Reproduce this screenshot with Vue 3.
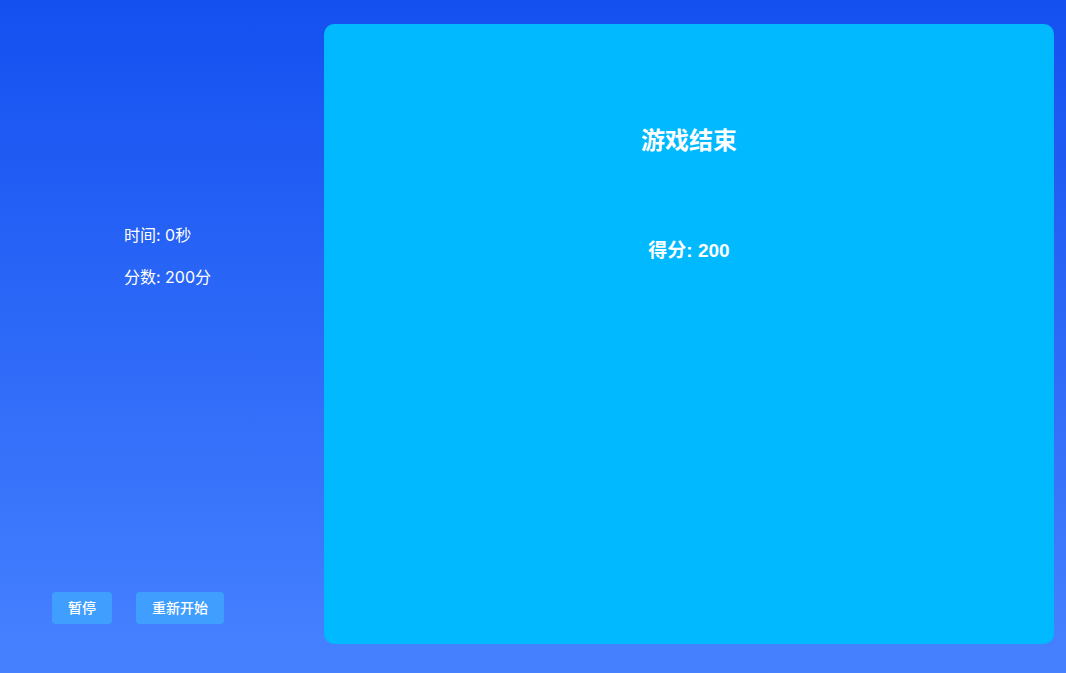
<script setup>
import { ref } from 'vue'

const time = ref(0)
const score = ref(200)
</script>

<template>
  <div class="game">
    <aside class="side">
      <div class="stats">
        <p>时间: {{ time }}秒</p>
        <p>分数: {{ score }}分</p>
      </div>
      <div class="actions">
        <button type="button">暂停</button>
        <button type="button">重新开始</button>
      </div>
    </aside>
    <main class="board">
      <h2>游戏结束</h2>
      <h3>得分: {{ score }}</h3>
    </main>
  </div>
</template>

<style>
body {
  margin: 0;
}
</style>

<style scoped>
.game {
  display: flex;
  gap: 24px;
  box-sizing: border-box;
  min-height: 100vh;
  padding: 24px 12px 29px 0;
  background: linear-gradient(#1450f0, #4682ff);
  color: #fff;
  font-family: "Liberation Sans", "Noto Sans CJK SC", sans-serif;
}

.side {
  display: flex;
  flex-direction: column;
  justify-content: space-between;
  box-sizing: border-box;
  flex: 0 0 300px;
  padding: 199px 0 20px 52px;
}

.stats {
  display: grid;
  gap: 18px;
  padding-left: 72px;
  font-family: Inter, "Noto Sans CJK SC", sans-serif;
  font-feature-settings: "calt" 0;
  font-size: 16px;
  line-height: 24px;
}

.stats p {
  margin: 0;
}

.actions {
  display: flex;
  gap: 24px;
}

button {
  height: 32px;
  padding: 0 16px;
  border: 0;
  border-radius: 4px;
  background: #409eff;
  color: #fff;
  font: 500 14px/32px "Liberation Sans", "Noto Sans CJK SC", sans-serif;
  cursor: pointer;
}

.board {
  flex: 1;
  box-sizing: border-box;
  padding-top: 101px;
  border-radius: 10px;
  background: #00b9ff;
  text-align: center;
}

h2,
h3 {
  margin: 0;
}

h2 {
  margin-bottom: 78px;
  font-size: 24px;
  line-height: 32px;
}

h3 {
  font-size: 19px;
  line-height: 32px;
}
</style>
